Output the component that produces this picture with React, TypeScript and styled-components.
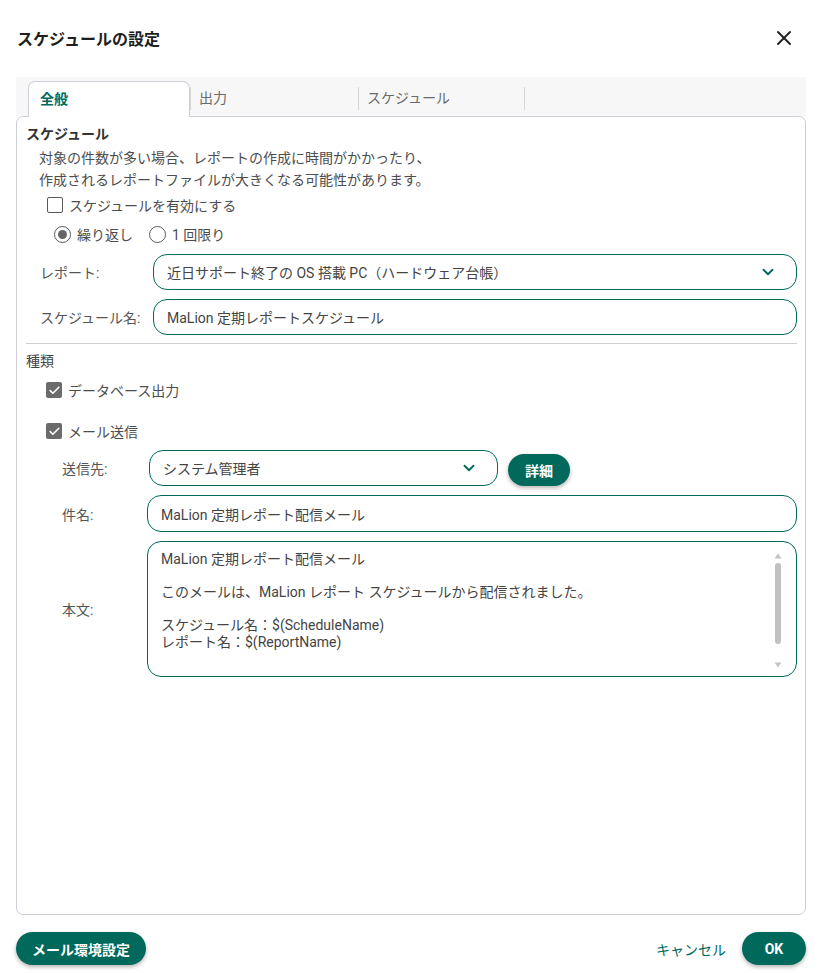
import React from 'react'
import styled, { createGlobalStyle } from 'styled-components'
import { X, ChevronDown, Check } from 'lucide-react'

const GREEN = '#00695c'

const GlobalStyle = createGlobalStyle`
    html, body {
        margin: 0;
        padding: 0;
        background: #fff;
    }
    body {
        font-family: Roboto, "Noto Sans CJK JP", sans-serif;
        color: #4d4d4d;
        font-size: 14px;
    }
    * { box-sizing: border-box; }
`

const Dialog = styled.div`
    width: 822px;
    height: 973px;
    padding: 0 16px 8px;
    display: flex;
    flex-direction: column;
`

const Header = styled.div`
    height: 77px;
    flex-shrink: 0;
    display: flex;
    align-items: center;
    justify-content: space-between;
    padding: 0 10px 1px 1px;
`

const Title = styled.h1`
    margin: 0;
    font-size: 16px;
    font-weight: 700;
    color: #1f1f1f;
`

const CloseButton = styled.button`
    border: none;
    background: none;
    padding: 0;
    display: flex;
    color: #222;
    cursor: pointer;
`

const TabBar = styled.div`
    height: 39px;
    flex-shrink: 0;
    background: #f7f7f8;
    padding: 4px 12px 0;
    display: flex;
    align-items: flex-start;
`

const Tab = styled.div<{ $active?: boolean; $last?: boolean; $width: number }>`
    width: ${p => p.$width}px;
    display: flex;
    align-items: center;
    font-size: 14px;
    ${p => p.$active ? `
        height: 36px;
        padding: 0 0 4px 11px;
        background: #fff;
        border: 1px solid #cfcdd6;
        border-bottom: none;
        border-radius: 7px 7px 0 0;
        color: ${GREEN};
        font-weight: 700;
        position: relative;
        z-index: 1;
    ` : `
        height: 23px;
        margin-top: 6px;
        padding: 0 0 3px 8px;
        color: #6a6a6a;
        border-left: 1px solid #d6d6d6;
    `}
    ${p => p.$last ? 'border-right: 1px solid #d6d6d6;' : ''}
`

const Panel = styled.div`
    flex: 1;
    border: 1px solid #cfcdd6;
    border-radius: 7px;
    padding: 7px 8px 0 9px;
    display: flex;
    flex-direction: column;
`

const SectionTitle = styled.div<{ $top?: number }>`
    margin-top: ${p => p.$top || 0}px;
    line-height: 20px;
    font-weight: 700;
    color: #333;
    font-size: 14px;
`

const Kind = styled.div<{ $top?: number }>`
    margin-top: ${p => p.$top || 0}px;
    line-height: 20px;
    color: #444;
    font-size: 14px;
`

const Description = styled.p`
    margin: 3px 0 0 13px;
    line-height: 22px;
    font-size: 14px;
    color: #4d4d4d;
`

const OptionRow = styled.div<{ $top: number; $indent: number }>`
    margin-top: ${p => p.$top}px;
    margin-left: ${p => p.$indent}px;
    height: 24px;
    display: flex;
    align-items: center;
    gap: 6px;
    color: #4d4d4d;
`

const CheckBox = styled.span<{ $checked?: boolean }>`
    width: 16px;
    height: 16px;
    border-radius: 2px;
    display: inline-flex;
    align-items: center;
    justify-content: center;
    ${p => p.$checked
        ? 'background: #6b6b6b; border: none; color: #fff;'
        : 'border: 1.5px solid #5a5a5a; background: #fff;'}
`

const Radio = styled.span<{ $checked?: boolean }>`
    width: 17px;
    height: 17px;
    border-radius: 50%;
    border: 1.5px solid #5a5a5a;
    display: inline-flex;
    align-items: center;
    justify-content: center;
    &::after {
        content: '';
        width: 9px;
        height: 9px;
        border-radius: 50%;
        background: ${p => p.$checked ? '#666' : 'transparent'};
    }
`

const RadioLabel = styled.span`
    margin-right: 10px;
`

const FieldRow = styled.div<{ $top: number; $indent: number }>`
    margin-top: ${p => p.$top}px;
    margin-left: ${p => p.$indent}px;
    display: flex;
    align-items: center;
`

const Label = styled.div<{ $width: number }>`
    width: ${p => p.$width}px;
    flex-shrink: 0;
    color: #555;
    font-size: 14px;
`

const Field = styled.div<{ $width?: number; $height?: number }>`
    ${p => p.$width ? `width: ${p.$width}px;` : 'flex: 1;'}
    height: ${p => p.$height || 36}px;
    border: 1px solid ${GREEN};
    border-radius: 14px;
    display: flex;
    align-items: center;
    padding: 0 19px 0 13px;
    color: #444;
    font-size: 14px;
    background: #fff;
`

const FieldText = styled.span`
    flex: 1;
    white-space: nowrap;
    overflow: hidden;
`

const Divider = styled.hr`
    margin: 8px 0 0;
    border: none;
    border-top: 1px solid #cfcfcf;
`

const PillButton = styled.button<{ $width?: number; $height?: number }>`
    height: ${p => p.$height || 33}px;
    ${p => p.$width ? `width: ${p.$width}px;` : 'padding: 0 16px;'}
    border: none;
    border-radius: 17px;
    background: ${GREEN};
    color: #fff;
    font-family: Roboto, "Noto Sans CJK JP", sans-serif;
    font-size: 14px;
    font-weight: 700;
    box-shadow: 0 2px 4px rgba(0, 0, 0, 0.3);
    cursor: pointer;
`

const DetailButton = styled(PillButton)`
    margin-left: 10px;
    margin-top: 3px;
`

const BodyArea = styled.div`
    flex: 1;
    height: 136px;
    border: 1px solid ${GREEN};
    border-radius: 14px;
    display: flex;
    padding: 9px 14px 8px 13px;
    background: #fff;
`

const BodyText = styled.div`
    flex: 1;
    white-space: pre;
    line-height: 16.5px;
    color: #444;
    font-size: 14px;
`

const ScrollTrack = styled.div`
    width: 9px;
    display: flex;
    flex-direction: column;
    align-items: center;
    gap: 4px;
    padding-top: 2px;
`

const ScrollThumb = styled.div`
    width: 6px;
    height: 81px;
    border-radius: 3px;
    background: #c1c1c1;
`

const Footer = styled.div`
    margin-top: 17px;
    height: 33px;
    flex-shrink: 0;
    display: flex;
    align-items: center;
`

const Spacer = styled.div`
    flex: 1;
`

const TextButton = styled.button`
    border: none;
    background: none;
    color: ${GREEN};
    font-family: Roboto, "Noto Sans CJK JP", sans-serif;
    font-size: 14px;
    padding: 0;
    margin-right: 16px;
    cursor: pointer;
`

const Arrow = ({ up }: { up?: boolean }) => (
    <svg width="8" height="6" viewBox="0 0 8 6">
        <path d={up ? 'M4 0.5 L7.5 5.5 L0.5 5.5 Z' : 'M0.5 0.5 L7.5 0.5 L4 5.5 Z'} fill="#c4c4c4" />
    </svg>
)

const mailBody = `MaLion 定期レポート配信メール

このメールは、MaLion レポート スケジュールから配信されました。

スケジュール名：$(ScheduleName)
レポート名：$(ReportName)`

export default function App() {
    return (
        <Dialog>
            <GlobalStyle />
            <Header>
                <Title>スケジュールの設定</Title>
                <CloseButton aria-label="閉じる"><X size={24} strokeWidth={2} /></CloseButton>
            </Header>
            <TabBar>
                <Tab $active $width={162}>全般</Tab>
                <Tab $width={168}>出力</Tab>
                <Tab $width={167} $last>スケジュール</Tab>
            </TabBar>
            <Panel>
                <SectionTitle>スケジュール</SectionTitle>
                <Description>
                    対象の件数が多い場合、レポートの作成に時間がかかったり、<br />
                    作成されるレポートファイルが大きくなる可能性があります。
                </Description>
                <OptionRow $top={2} $indent={21}>
                    <CheckBox />
                    <span>スケジュールを有効にする</span>
                </OptionRow>
                <OptionRow $top={5} $indent={28}>
                    <Radio $checked />
                    <RadioLabel>繰り返し</RadioLabel>
                    <Radio />
                    <span>1 回限り</span>
                </OptionRow>
                <FieldRow $top={8} $indent={14}>
                    <Label $width={113}>レポート:</Label>
                    <Field>
                        <FieldText>近日サポート終了の OS 搭載 PC（ハードウェア台帳）</FieldText>
                        <ChevronDown size={18} strokeWidth={2.5} color={GREEN} />
                    </Field>
                </FieldRow>
                <FieldRow $top={9} $indent={14}>
                    <Label $width={113}>スケジュール名:</Label>
                    <Field>
                        <FieldText>MaLion 定期レポートスケジュール</FieldText>
                    </Field>
                </FieldRow>
                <Divider />
                <Kind $top={7}>種類</Kind>
                <OptionRow $top={7} $indent={20}>
                    <CheckBox $checked><Check size={13} strokeWidth={3} /></CheckBox>
                    <span>データベース出力</span>
                </OptionRow>
                <OptionRow $top={17} $indent={20}>
                    <CheckBox $checked><Check size={13} strokeWidth={3} /></CheckBox>
                    <span>メール送信</span>
                </OptionRow>
                <FieldRow $top={7} $indent={36}>
                    <Label $width={87}>送信先:</Label>
                    <Field $width={349}>
                        <FieldText>システム管理者</FieldText>
                        <ChevronDown size={18} strokeWidth={2.5} color={GREEN} />
                    </Field>
                    <DetailButton $width={62} $height={32}>詳細</DetailButton>
                </FieldRow>
                <FieldRow $top={9} $indent={36}>
                    <Label $width={85}>件名:</Label>
                    <Field $height={37}>
                        <FieldText>MaLion 定期レポート配信メール</FieldText>
                    </Field>
                </FieldRow>
                <FieldRow $top={9} $indent={36}>
                    <Label $width={85}>本文:</Label>
                    <BodyArea>
                        <BodyText>{mailBody}</BodyText>
                        <ScrollTrack>
                            <Arrow up />
                            <ScrollThumb />
                            <Spacer />
                            <Arrow />
                        </ScrollTrack>
                    </BodyArea>
                </FieldRow>
            </Panel>
            <Footer>
                <PillButton>メール環境設定</PillButton>
                <Spacer />
                <TextButton>キャンセル</TextButton>
                <PillButton $width={64}>OK</PillButton>
            </Footer>
        </Dialog>
    )
}
